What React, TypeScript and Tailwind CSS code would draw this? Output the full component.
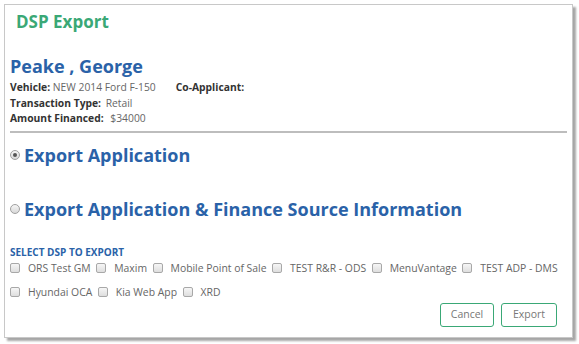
import React from "react";

const dsps1 = ["ORS Test GM", "Maxim", "Mobile Point of Sale", "TEST R&R - ODS", "MenuVantage", "TEST ADP - DMS"];
const dsps2 = ["Hyundai OCA", "Kia Web App", "XRD"];

function Check({ label }: { label: string }) {
  return (
    <label className="flex items-center">
      <span className="w-[10px] h-[10px] rounded-[2px] border border-[#a8a8a8] bg-gradient-to-b from-[#f6f6f6] to-[#dedede] mr-[8px]" />
      <span className="text-[10.4px] text-[#666] mr-[5.5px]">{label}</span>
    </label>
  );
}

function Radio({ checked }: { checked?: boolean }) {
  return (
    <span className="w-[10px] h-[10px] rounded-full border border-[#a0a0a0] bg-gradient-to-b from-[#f6f6f6] to-[#d8d8d8] flex items-center justify-center mr-[4px]">
      {checked && <span className="w-[4px] h-[4px] rounded-full bg-[#555]" />}
    </span>
  );
}

export default function App() {
  return (
    <div className="w-[579px] h-[344px] bg-white pt-[4px] pl-[4px]" style={{ fontFamily: '"Open Sans", "Noto Sans", sans-serif' }}>
      <div className="w-[569px] h-[334px] border border-[#c8c8c8] bg-white shadow-[3px_3px_2px_rgba(0,0,0,0.35)] flex flex-col px-[5px]">
        <div className="pl-[6px] pt-[6px] text-[17px] font-bold text-[#3aa876] leading-[22px]">DSP Export</div>
        <div className="mt-[21px] text-[18px] font-bold text-[#2a62a8] leading-[24px]">Peake , George</div>
        <div className="mt-[2px] text-[10.3px] text-[#333] leading-[15.5px]">
          <div className="flex">
            <span><b>Vehicle:</b> <span className="text-[#666] text-[10.3px]">NEW 2014 Ford F-150</span></span>
            <b className="ml-[20px]">Co-Applicant:</b>
          </div>
          <div><b>Transaction Type:</b> <span className="text-[#666] text-[10.3px] ml-[2px]">Retail</span></div>
          <div><b>Amount Financed:</b> <span className="text-[#666] text-[10.3px] ml-[4px]">$34000</span></div>
        </div>
        <div className="mt-[4px] h-[2px] bg-[#bdbdbd]" />
        <div className="mt-[10px] flex items-center">
          <Radio checked />
          <span className="text-[18px] font-bold text-[#2a62a8] leading-[24px]">Export Application</span>
        </div>
        <div className="mt-[30px] flex items-center">
          <Radio />
          <span className="text-[18px] font-bold text-[#2a62a8] leading-[24px]">Export Application &amp; Finance Source Information</span>
        </div>
        <div className="mt-[25px] text-[10px] font-bold text-[#2a62a8] leading-[12px]">SELECT DSP TO EXPORT</div>
        <div className="mt-[3px] flex items-center h-[16px]">
          {dsps1.map((d) => <Check key={d} label={d} />)}
        </div>
        <div className="mt-[8px] flex items-center h-[16px]">
          {dsps2.map((d) => <Check key={d} label={d} />)}
        </div>
        <div className="mt-[2px] flex justify-end gap-[7px] pr-[10px]">
          <button className="w-[54px] h-[24px] rounded-[3px] border border-[#3aa876] text-[10.5px] text-[#777] bg-white">Cancel</button>
          <button className="w-[56px] h-[24px] rounded-[3px] border border-[#3aa876] text-[10.5px] text-[#777] bg-white">Export</button>
        </div>
      </div>
    </div>
  );
}
